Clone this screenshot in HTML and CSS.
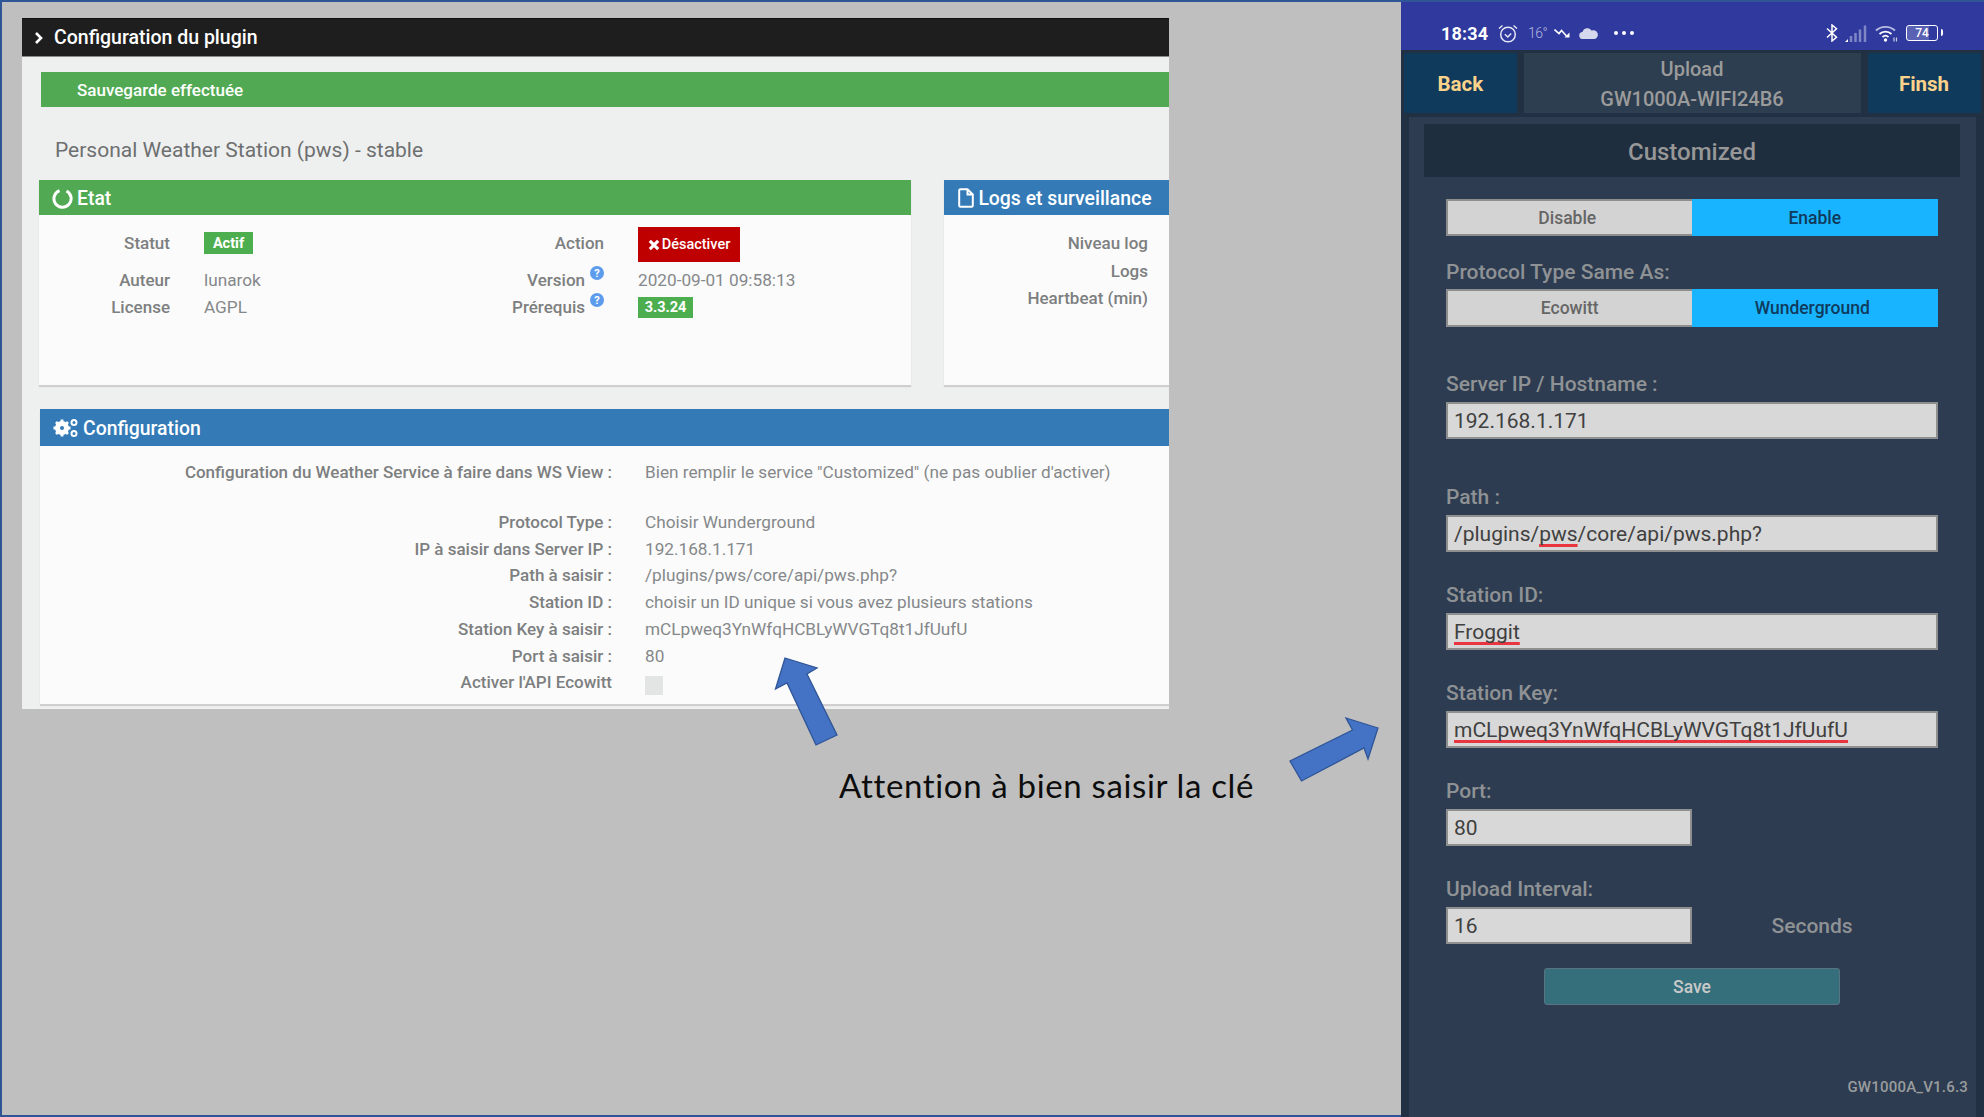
FILE: index.html
```html
<!DOCTYPE html>
<html lang="fr">
<head>
<meta charset="utf-8">
<title>Configuration du plugin</title>
<link rel="stylesheet" href="styles.css">
</head>
<body>
<div class="slide">
  <main class="left">
    <section class="plugin">
      <header class="plugin-head">
        <svg class="chev" viewBox="0 0 10 12"><path d="M2 1l5 5-5 5" fill="none" stroke="#fff" stroke-width="2.6"/></svg>
        <span>Configuration du plugin</span>
      </header>
      <div class="alert">Sauvegarde effectuée</div>
      <h1 class="title">Personal Weather Station (pws) - stable</h1>
      <div class="panels">
        <article class="panel etat">
          <h2 class="panel-head green">
            <svg class="ico-notch" viewBox="0 0 21 21"><path d="M14.500 3a8.600 8.600 0 1 1-7-.4" fill="none" stroke="#fff" stroke-width="3"/></svg>
            <span>Etat</span>
          </h2>
          <div class="etat-grid">
            <div class="lbl up">Statut</div>
            <div class="up"><span class="badge actif">Actif</span></div>
            <div class="lbl up">Action</div>
            <div><span class="btn-off"><svg class="x" viewBox="0 0 10 10"><path d="M1.5 1.5l7 7M8.500 1.500l-7 7" stroke="#fff" stroke-width="2.600"/></svg>Désactiver</span></div>
            <div class="lbl">Auteur</div>
            <div class="val">lunarok</div>
            <div class="lbl lbl-help">Version<span class="help">?</span></div>
            <div class="val">2020-09-01 09:58:13</div>
            <div class="lbl">License</div>
            <div class="val">AGPL</div>
            <div class="lbl lbl-help">Prérequis<span class="help">?</span></div>
            <div><span class="badge ver">3.3.24</span></div>
          </div>
        </article>
        <article class="panel logs">
          <h2 class="panel-head blue">
            <svg class="ico-file" viewBox="0 0 16 20"><path d="M1.200 2.500a1.300 1.300 0 0 1 1.300-1.300h7l5.300 5.300v11a1.300 1.300 0 0 1-1.300 1.300h-11a1.300 1.300 0 0 1-1.300-1.300zM9.500 1.200v5.300h5.300" fill="none" stroke="#fff" stroke-width="2"/></svg>
            <span>Logs et surveillance</span>
          </h2>
          <div class="logs-list">
            <div class="lbl">Niveau log</div>
            <div class="lbl">Logs</div>
            <div class="lbl">Heartbeat (min)</div>
          </div>
        </article>
      </div>
      <article class="panel config">
        <h2 class="panel-head blue">
          <svg class="ico-gears" viewBox="0 0 26 20">
            <circle cx="9" cy="10" r="5" fill="none" stroke="#fff" stroke-width="4"/>
            <path d="M9 1.500v17M.5 10h17M3 4l12 12M15 4L3 16" stroke="#fff" stroke-width="2.800"/>
            <circle cx="21" cy="4.500" r="2.500" fill="none" stroke="#fff" stroke-width="2"/>
            <circle cx="21" cy="15.500" r="2.500" fill="none" stroke="#fff" stroke-width="2"/>
            <circle cx="9" cy="10" r="2" fill="#337ab7"/>
          </svg>
          <span>Configuration</span>
        </h2>
        <div class="cfg-grid">
          <div class="lbl">Configuration du Weather Service à faire dans WS View :</div>
          <div class="val">Bien remplir le service "Customized" (ne pas oublier d'activer)</div>
          <div class="spacer"></div>
          <div class="lbl">Protocol Type :</div><div class="val">Choisir Wunderground</div>
          <div class="lbl">IP à saisir dans Server IP :</div><div class="val">192.168.1.171</div>
          <div class="lbl">Path à saisir :</div><div class="val">/plugins/pws/core/api/pws.php?</div>
          <div class="lbl">Station ID :</div><div class="val">choisir un ID unique si vous avez plusieurs stations</div>
          <div class="lbl">Station Key à saisir :</div><div class="val">mCLpweq3YnWfqHCBLyWVGTq8t1JfUufU</div>
          <div class="lbl">Port à saisir :</div><div class="val">80</div>
          <div class="lbl">Activer l'API Ecowitt</div><div><span class="check"></span></div>
        </div>
      </article>
    </section>
    <p class="caption">Attention à bien saisir la clé</p>
  </main>

  <aside class="phone">
    <div class="status">
      <span class="time">18:34</span>
      <svg class="s-clock" viewBox="0 0 20 19"><circle cx="10" cy="10.500" r="7.300" fill="none" stroke="#e6e8f5" stroke-width="1.500"/><path d="M6.800 10.300l3 2.700 3.400-3.600" fill="none" stroke="#e6e8f5" stroke-width="1.400"/><path d="M1 4.500l3.500-3M19 4.500l-3.500-3" stroke="#e6e8f5" stroke-width="1.500"/></svg>
      <span class="temp">16°</span>
      <svg class="s-trend" viewBox="0 0 16 10"><path d="M.5 1.500l4.500 4 2.500-3 5 5.500" fill="none" stroke="#fff" stroke-width="1.600"/><path d="M15.500 4.500v5h-5z" fill="#fff"/></svg>
      <svg class="s-cloud" viewBox="0 0 19 11"><path d="M4 11a3.500 3.500 0 0 1-.5-7A5 5 0 0 1 12.500 2.500 4 4 0 0 1 16 11z" fill="#d5d8ec"/></svg>
      <span class="dots"><i></i><i></i><i></i></span>
      <span class="grow"></span>
      <svg class="s-bt" viewBox="0 0 12 18"><path d="M1 4.500l9.500 8.700L6 17V1l4.500 3.800L1 13.500" fill="none" stroke="#fff" stroke-width="1.500"/></svg>
      <svg class="s-sig" viewBox="0 0 22 17"><path d="M0 17h3v-3z" fill="#fff"/><path d="M6 17V11M10.500 17V8M15 17V4.500M20 17V.5" stroke="#7e86c6" stroke-width="2.500"/></svg>
      <svg class="s-wifi" viewBox="0 0 23 18"><path d="M1 6.500a14 14 0 0 1 19 0" fill="none" stroke="#b9bee2" stroke-width="1.800"/><path d="M4.500 10a9 9 0 0 1 12 0M7.500 13a4.500 4.500 0 0 1 6 0" fill="none" stroke="#fff" stroke-width="1.800"/><circle cx="10.500" cy="16" r="1.700" fill="#fff"/><path d="M19 13.500v4M21.500 13.500v4" stroke="#c8cce8" stroke-width="1.200"/></svg>
      <span class="batt"><b>74</b></span>
    </div>
    <nav class="nav">
      <div class="nav-btn nav-back">Back</div>
      <div class="nav-title"><span>Upload</span><span>GW1000A-WIFI24B6</span></div>
      <div class="nav-btn nav-finish">Finsh</div>
    </nav>
    <div class="content">
      <div class="custom">Customized</div>
      <form class="form">
        <div class="toggle first"><span class="t-off shift">Disable</span><span class="t-on">Enable</span></div>
        <div class="f-label proto">Protocol Type Same As:</div>
        <div class="toggle"><span class="t-off">Ecowitt</span><span class="t-on shift">Wunderground</span></div>
        <div class="f-label server">Server IP / Hostname :</div>
        <div class="input">192.168.1.171</div>
        <div class="f-label wide">Path :</div>
        <div class="input">/plugins/<span class="spell">pws</span>/core/api/pws.php?</div>
        <div class="f-label">Station ID:</div>
        <div class="input"><span class="spell">Froggit</span></div>
        <div class="f-label">Station Key:</div>
        <div class="input"><span class="spell">mCLpweq3YnWfqHCBLyWVGTq8t1JfUufU</span></div>
        <div class="f-label">Port:</div>
        <div class="input half">80</div>
        <div class="f-label">Upload Interval:</div>
        <div class="row-int"><div class="input half">16</div><span class="seconds">Seconds</span></div>
        <div class="save">Save</div>
      </form>
      <div class="version">GW1000A_V1.6.3</div>
    </div>
  </aside>

  <svg class="arrows" viewBox="0 0 1984 1117">
    <polygon points="785,658 817,668 807,674 837,735 816,745 787,683 775.500,689"/>
    <polygon points="1378,728 1346,718 1352.500,730 1290,761 1301.500,781 1364,748 1368,759"/>
  </svg>
</div>
</body>
</html>
```

FILE: styles.css
```css
* { box-sizing: border-box; }
html, body { margin: 0; padding: 0; }
body { width: 1984px; height: 1117px; overflow: hidden; font-family: Roboto, "Liberation Sans", sans-serif; }

.slide { position: relative; display: flex; width: 1984px; height: 1117px; background: #bfbfbf; border: solid #2f5597; border-width: 2px 0 2px 2px; }

/* Left column */
.left { flex: 0 0 1399px; padding: 16px 0 0 20px; }
.plugin { width: 1147px; height: 691px; background: #eef0ef; }
.plugin-head { display: flex; align-items: center; height: 39px; padding-left: 12px; gap: 10px; background: #1e1e1e; border-top: 1px solid #111; border-bottom: 1px solid #8a8a8a; color: #fff; font-size: 19.500px; font-weight: 500; }
.chev { width: 10px; height: 12px; }
.alert { display: flex; align-items: center; height: 35px; margin: 15px 0 0 19px; padding-left: 36px; background: #51aa53; color: #fff; font-size: 17px; font-weight: 500; }
.title { height: 73px; margin: 0; padding: 13px 0 0 33px; display: flex; align-items: center; color: #6d6f70; font-size: 21px; font-weight: 400; }
.panels { display: flex; gap: 33.700px; margin-left: 17px; }
.panel { background: #fbfbfb; box-shadow: 0 2px 1px #cfcfcf; }
.etat { width: 871.700px; height: 205px; }
.logs { width: 224.600px; height: 205px; }
.panel-head { display: flex; align-items: center; height: 35px; margin: 0; padding-top: 1px; color: #fff; font-size: 19.400px; font-weight: 500; }
.green { background: #51aa53; padding-left: 13px; gap: 4px; }
.blue { background: #337ab7; padding-left: 14px; gap: 4px; }
.config .blue { padding-left: 13px; }
.ico-notch { width: 21px; height: 21px; }
.ico-file { width: 16px; height: 20px; }
.ico-gears { width: 26px; height: 20px; }

.lbl { color: #7d7f80; font-size: 17px; font-weight: 500; text-align: right; }
.val { color: #85888a; font-size: 17.200px; }
.up { margin-bottom: 3px; }

.etat-grid { display: grid; grid-template-columns: 131px 212px 154px auto; grid-template-rows: 35px 36px 18px; column-gap: 34px; align-items: center; padding-top: 12px; }
.badge { display: inline-flex; align-items: center; justify-content: center; background: #4cae4f; color: #fff; font-size: 14.500px; font-weight: 700; }
.actif { width: 49px; height: 22px; }
.ver { width: 55px; height: 21px; }
.btn-off { display: inline-flex; align-items: center; justify-content: center; gap: 2px; width: 102px; height: 35px; background: #bf0000; color: #fff; font-size: 14.500px; font-weight: 500; }
.x { width: 12px; height: 12px; }
.lbl-help { display: flex; justify-content: flex-end; align-items: center; gap: 5px; }
.help { display: flex; align-items: center; justify-content: center; width: 14px; height: 14px; margin-bottom: 14px; border-radius: 50%; background: #5d9cec; color: #fff; font-size: 11px; font-weight: 700; }

.logs-list { display: grid; grid-auto-rows: 27.500px; align-items: center; padding: 14.500px 21px 0 0; }

.config { margin: 24px 0 0 18px; height: 295px; }
.config .panel-head { height: 37px; }
.cfg-grid { display: grid; grid-template-columns: 572px auto; grid-template-rows: 26.750px 23.250px repeat(7, 26.750px); column-gap: 33px; align-items: center; padding-top: 12.600px; }
.spacer { grid-column: 1 / -1; }
.check { display: block; width: 18px; height: 19px; margin-top: 6px; background: #e3e5e5; }

.caption { margin: 56px 0 0 817px; color: #0d0d0d; font-family: Lato, "Open Sans", sans-serif; font-size: 33px; letter-spacing: .65px; line-height: 40px; white-space: nowrap; }

/* Phone */
.phone { flex: 0 0 583px; display: flex; flex-direction: column; height: 1115px; margin-bottom: -2px; background: #213043; }
.status { display: flex; align-items: center; flex: 0 0 48px; padding: 14px 46px 0 40px; background: #303a9e; color: #fff; }
.time { font-size: 18px; font-weight: 700; width: 47px; letter-spacing: .2px; }
.s-clock { width: 20px; height: 19px; margin-left: 10px; }
.temp { width: 26px; margin-left: 10px; color: #b4b8df; font-size: 14px; letter-spacing: -.5px; font-weight: 300; }
.s-trend { width: 16px; height: 10px; }
.s-cloud { width: 19px; height: 11px; margin-left: 9px; }
.dots { display: flex; gap: 4px; margin-left: 16px; }
.dots i { width: 4px; height: 4px; border-radius: 50%; background: #fff; }
.grow { flex: 1; }
.s-bt { width: 12px; height: 18px; }
.s-sig { width: 22px; height: 17px; margin-left: 7px; }
.s-wifi { width: 23px; height: 18px; margin-left: 8px; }
.batt { position: relative; display: flex; align-items: center; justify-content: center; width: 32px; height: 16px; margin-left: 8px; border: 1.500px solid #fff; border-radius: 3px; font-size: 12px; background: linear-gradient(90deg, #5a62b4 74%, transparent 74%); }
.batt b { font-weight: 500; }
.batt::after { content: ""; position: absolute; right: -6px; top: 3px; width: 2px; height: 7px; background: #fff; border-radius: 0 2px 2px 0; }

.nav { display: flex; gap: 7px; margin: 3px 0 0 3px; height: 60px; }
.nav-btn { display: flex; align-items: center; justify-content: center; padding-top: 2px; background: #103a5c; color: #fbd38a; font-size: 20.500px; font-weight: 700; }
.nav-back { width: 112.500px; }
.nav-finish { width: 113px; }
.nav-title { display: flex; flex-direction: column; align-items: center; justify-content: center; gap: 7px; width: 337px; padding-top: 2px; background: #2d3e50; color: #9b9b9b; font-size: 20px; font-weight: 500; line-height: 23px; }

.content { display: flex; flex-direction: column; flex: 1; width: 567px; margin: 4px 0 0 8px; padding: 7px 8px 0 15px; background: #2d3c50; }
.custom { display: flex; align-items: center; justify-content: center; flex: 0 0 53px; margin-right: 8px; padding-top: 2px; background: #1f2e3f; color: #979797; font-size: 24px; font-weight: 500; }
.form { display: flex; flex-direction: column; width: 492px; margin: 22px 0 0 22px; }
.toggle { display: flex; height: 38px; font-size: 17.500px; font-weight: 500; }
.toggle.first { height: 37px; }
.t-off { display: flex; align-items: center; justify-content: center; width: 245.500px; background: #d3d3d3; border: 2px solid #8d8d8d; border-right: 0; color: #666; }
.t-on { display: flex; align-items: center; justify-content: center; flex: 1; background: #18b4ff; color: #103a5c; }
.t-off.shift, .t-on.shift { padding-right: 5px; }
.f-label { height: 24px; margin: 31px 0 6px; color: #8f9295; font-size: 21px; font-weight: 500; line-height: 24px; }
.f-label.server { margin-top: 45px; }
.f-label.wide { margin-top: 46px; }
.f-label.proto { margin: 24px 0 5px; }
.input { display: flex; align-items: center; height: 37px; padding-left: 6px; background: #d8d8d8; border: 2px solid #8f8f8f; color: #404040; font-size: 21px; white-space: pre; }
.half { width: 245.500px; }
.spell { text-decoration: underline solid #e8353f 2.500px; text-decoration-skip-ink: none; text-underline-offset: 3px; }
.row-int { display: flex; align-items: center; }
.seconds { margin-left: 80px; color: #8f9295; font-size: 21px; font-weight: 500; }
.save { display: flex; align-items: center; justify-content: center; align-self: center; width: 296px; height: 37px; margin-top: 24px; background: #356f7c; border: 1px solid #5b7280; border-radius: 3px; color: #c9c9c9; font-size: 17.500px; font-weight: 500; }
.version { align-self: flex-end; margin-top: 72px; color: #9a9c9e; font-size: 15px; font-weight: 500; line-height: 20px; letter-spacing: .2px; }

/* Arrows lying over the slide */
.arrows { position: absolute; left: -2px; top: -2px; width: 1984px; height: 1117px; pointer-events: none; }
.arrows polygon { fill: #4472c4; stroke: #2f5597; stroke-width: 1.300; }
```
